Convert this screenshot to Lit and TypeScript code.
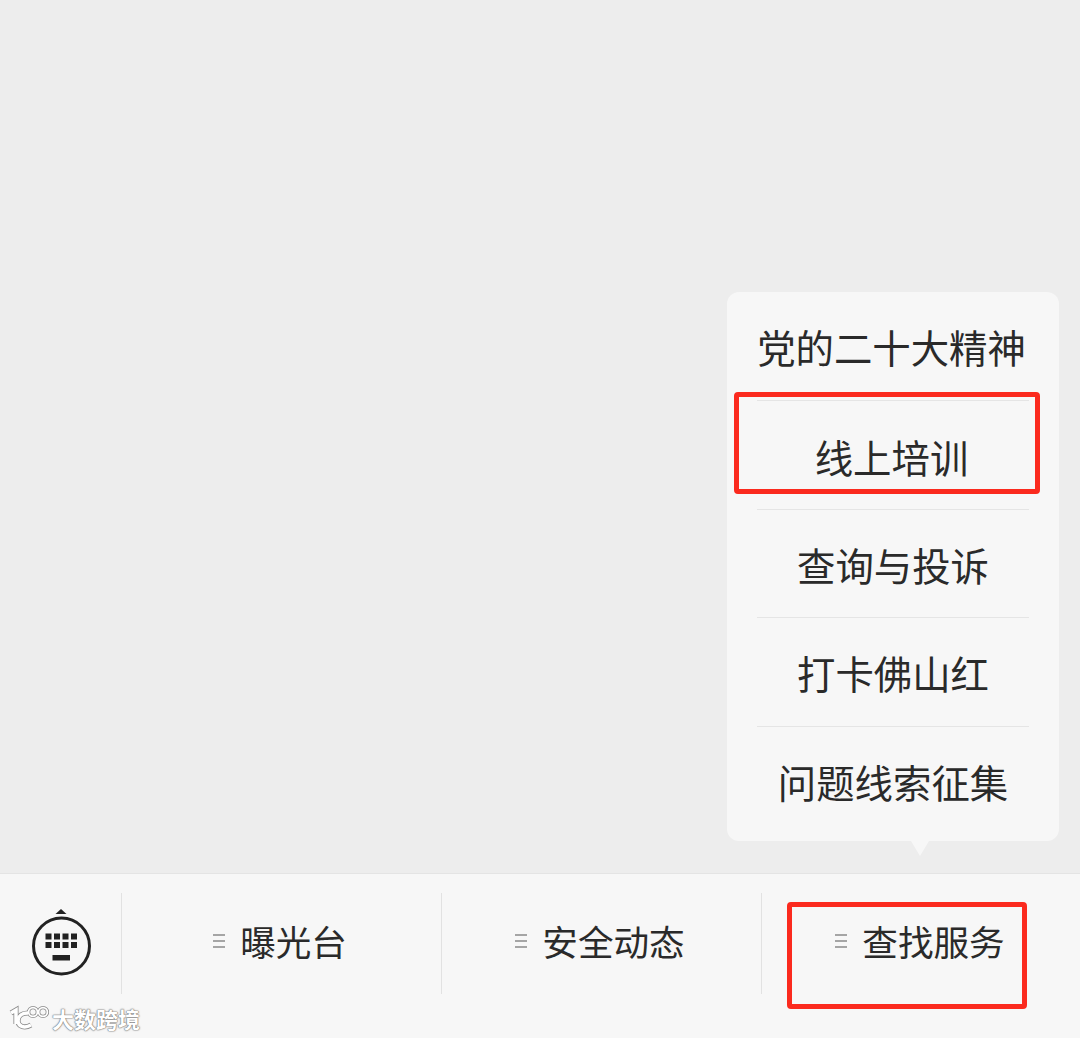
import { LitElement, html, css, svg } from "lit";
import { customElement } from "lit/decorators.js";

@customElement("app-root")
export class AppRoot extends LitElement {
  static styles = css`
    :host {
      display: flex;
      flex-direction: column;
      position: relative;
      width: 1080px;
      height: 1038px;
      overflow: hidden;
      background: #ededed;
      font-family: "Noto Sans CJK SC", "Noto Sans", sans-serif;
      color: #2a2a2a;
    }
    .stage { flex: 1; position: relative; }
    .menu {
      position: absolute;
      left: 727px;
      top: 292px;
      width: 332px;
      height: 549px;
      box-sizing: border-box;
      background: #f7f7f7;
      border-radius: 12px;
      padding: 0.5px 30px 0;
      display: flex;
      flex-direction: column;
    }
    .menu::after {
      content: "";
      position: absolute;
      left: 184px;
      bottom: -15px;
      border-left: 9px solid transparent;
      border-right: 9px solid transparent;
      border-top: 15px solid #f7f7f7;
    }
    .item {
      flex: 0 0 108.6px;
      display: flex;
      align-items: center;
      justify-content: center;
      font-size: 38.4px;
      line-height: 1;
      white-space: nowrap;
      border-bottom: 1px solid #e5e5e5;
      box-sizing: border-box;
    }
    .item:last-child { border-bottom: 0; }
    .item.first { padding-right: 3px; }
    .item.lift { padding: 2px 3px 0 0; }
    .item.drop { padding-top: 2px; }
    .bar {
      flex: 0 0 165px;
      box-sizing: border-box;
      background: #f7f7f7;
      border-top: 1px solid #e4e4e4;
      display: flex;
      align-items: flex-start;
      padding-top: 19px;
      position: relative;
    }
    .kbd {
      flex: 0 0 121px;
      height: 101px;
      display: flex;
      align-items: center;
      justify-content: center;
    }
    .kbd svg { display: block; }
    .tab {
      flex: 0 0 320px;
      box-sizing: border-box;
      height: 101px;
      border-left: 1px solid #e2e2e2;
      display: flex;
      align-items: center;
      justify-content: center;
      gap: 14px;
      font-size: 35.6px;
      line-height: 1;
      padding: 0 4px 6px 0;
      white-space: nowrap;
    }
    .tab svg { display: block; }
    .mark {
      position: absolute;
      border: 5px solid #fb2a1e;
      border-radius: 4px;
      box-sizing: border-box;
    }
    .mark.a { left: 734px; top: 392px; width: 306px; height: 102px; }
    .mark.b { left: 787px; top: 902px; width: 240px; height: 107px; }
    .wm {
      position: absolute;
      left: 8px;
      top: 1003px;
      display: flex;
      align-items: center;
      gap: 3px;
      color: #fff;
      font-size: 22px;
      line-height: 1;
      text-shadow: 0 0 2px #777, 0 0 1px #777, 0 0 1px #777;
    }
    .wm span { font-weight: 700; }
    .wm svg { display: block; filter: blur(0.4px); }
  `;

  private lines() {
    return html`<svg width="14" height="16" viewBox="0 0 14 16">
      <path d="M1 2h12M1 8h12M1 14h12" stroke="#8a8a8a" stroke-width="1.6" fill="none" />
    </svg>`;
  }

  private keyboard() {
    const keys = [];
    for (let r = 0; r < 2; r++) {
      for (let c = 0; c < 4; c++) {
        keys.push(svg`<rect x=${45 + c * 8.5} y=${933 + r * 8.5} width="6" height="6" fill="#222" />`);
      }
    }
    return html`<svg width="64" height="70" viewBox="28.5 908.5 64 70">
      <path d="M55 913.5L60.5 908.5l5.5 5z" fill="#222" />
      <circle cx="61" cy="945.5" r="28" fill="none" stroke="#222" stroke-width="3" />
      ${keys}
      <rect x="52" y="954.5" width="17.5" height="5.5" fill="#222" />
    </svg>`;
  }

  private logoPaths(color: string, extra: number) {
    return svg`<g stroke=${color} fill="none">
      <path d="M3 10l5-3v14" stroke-width=${3.5 + extra} />
      <path d="M20 10c-6 0-10 3-10 8s6 8 13 4" stroke-width=${3.5 + extra} />
      <circle cx="25" cy="9" r="4.4" stroke-width=${1.8 + extra} />
      <circle cx="35" cy="9" r="4.4" stroke-width=${1.8 + extra} />
    </g>`;
  }

  render() {
    const items = ["党的二十大精神", "线上培训", "查询与投诉", "打卡佛山红", "问题线索征集"];
    const cls = ["first", "lift", "drop", "", ""];
    return html`
      <div class="stage">
        <div class="menu">
          ${items.map((t, i) => html`<div class="item ${cls[i]}">${t}</div>`)}
        </div>
      </div>
      <div class="bar">
        <div class="kbd">${this.keyboard()}</div>
        ${["曝光台", "安全动态", "查找服务"].map(
          (t) => html`<div class="tab">${this.lines()}<span>${t}</span></div>`
        )}
      </div>
      <div class="mark a"></div>
      <div class="mark b"></div>
      <div class="wm">
        <svg width="41" height="30" viewBox="0 0 41 30">
          ${this.logoPaths("#8a8a8a", 1.6)} ${this.logoPaths("#fff", 0)}
        </svg>
        <span>大数跨境</span>
      </div>
    `;
  }
}
